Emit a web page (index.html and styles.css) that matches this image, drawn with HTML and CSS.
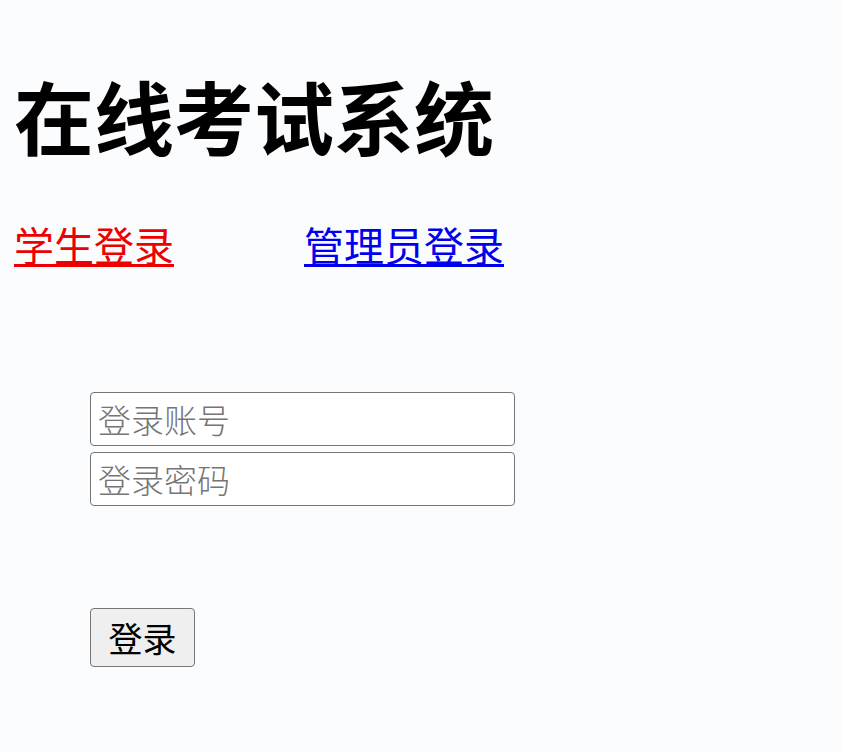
FILE: index.html
```html
<!DOCTYPE html>
<html lang="zh-CN">
<head>
<meta charset="utf-8">
<title>在线考试系统</title>
<link rel="stylesheet" href="styles.css">
</head>
<body>
<div class="page">
  <h1 class="title">在线考试系统</h1>
  <nav class="tabs">
    <a class="tab tab-student" href="#">学生登录</a>
    <a class="tab tab-admin" href="#">管理员登录</a>
  </nav>
  <form class="login">
    <input class="field" type="text" placeholder="登录账号">
    <input class="field" type="password" placeholder="登录密码">
    <button class="submit" type="button">登录</button>
  </form>
</div>
</body>
</html>
```
FILE: styles.css
```css
html, body {
  margin: 0;
  padding: 0;
  background: #fbfcfe;
}
body {
  font-family: "Noto Sans CJK SC", "Noto Sans", sans-serif;
  width: 842px;
  height: 752px;
  overflow: hidden;
}
.page {
  padding: 64px 0 0 14px;
}
.title {
  margin: 0;
  font-size: 80px;
  line-height: 100px;
  font-weight: 700;
  color: #000;
}
.tabs {
  display: flex;
  gap: 130px;
  margin-top: 56px;
}
.tab {
  font-size: 40px;
  line-height: 48px;
  text-decoration: underline;
  text-decoration-thickness: 3px;
  text-underline-offset: 3px;
}
.tab-student { color: #ee0000; }
.tab-admin { color: #0000ee; }
.login {
  display: flex;
  flex-direction: column;
  align-items: flex-start;
  margin: 124px 0 0 76px;
}
.field {
  box-sizing: border-box;
  width: 425px;
  height: 54px;
  margin: 0 0 6px 0;
  padding: 0 7px;
  border: 1.5px solid #767676;
  border-radius: 4px;
  background: #fff;
  font-family: "Noto Sans CJK SC", sans-serif;
  font-size: 33px;
  color: #000;
}
.field::placeholder {
  color: #757575;
  font-weight: 300;
}
.submit {
  box-sizing: border-box;
  width: 105px;
  height: 59px;
  margin-top: 96px;
  padding: 0;
  border: 1.5px solid #767676;
  border-radius: 4px;
  background: #efefef;
  font-family: "Noto Sans CJK SC", sans-serif;
  font-size: 34px;
  color: #000;
}
```
